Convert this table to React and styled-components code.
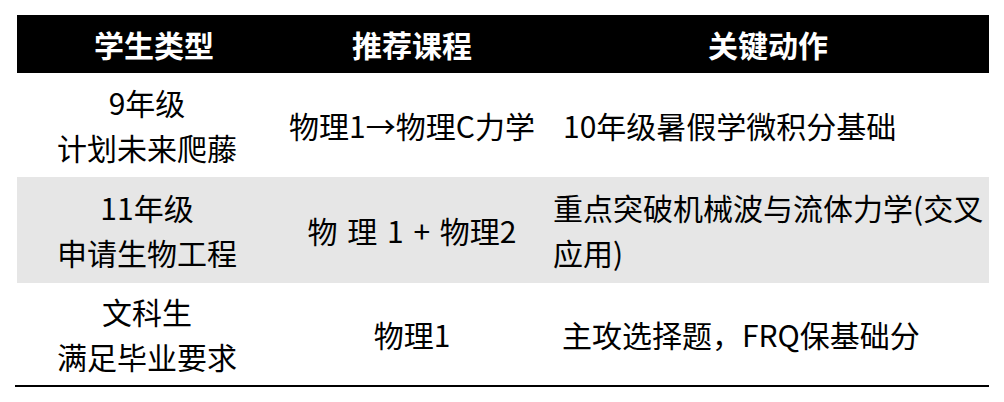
import React from "react";
import styled, { createGlobalStyle } from "styled-components";

const Global = createGlobalStyle`
  html, body { margin: 0; padding: 0; background: #fff; }
  body { font-family: "Noto Sans CJK SC", "Noto Sans", sans-serif; color: #000; }
`;

const Page = styled.div`
  padding: 15px 15px 0 15px;
  width: 974px;
`;

const Table = styled.div`
  display: flex;
  flex-direction: column;
  border-bottom: 2px solid #000;
`;

const Row = styled.div`
  display: grid;
  grid-template-columns: 260px 270px 1fr;
  height: ${(p) => p.$h}px;
  margin-left: 2px;
  background: ${(p) => (p.$head ? "#000" : p.$shade ? "#e6e6e6" : "#fff")};
  color: ${(p) => (p.$head ? "#fff" : "#000")};
`;

const Cell = styled.div`
  display: flex;
  flex-direction: column;
  justify-content: center;
  align-items: ${(p) => (p.$left ? "flex-start" : "center")};
  text-align: ${(p) => (p.$left ? "left" : "center")};
  padding-left: ${(p) => p.$pl || 0}px;
  padding-right: ${(p) => p.$pr || 0}px;
  font-size: 30px;
  line-height: 45px;
  font-weight: ${(p) => (p.$head ? 700 : 400)};
  word-spacing: ${(p) => p.$ws || 0}px;
  white-space: pre-wrap;
`;

const rows = [
  { h: 104, c1: ["9年级", "计划未来爬藤"], c2: "物理1→物理C力学", c3: "10年级暑假学微积分基础", pl: 16 },
  { h: 106, shade: true, c1: ["11年级", "申请生物工程"], c2: "物 理 1 + 物理2", ws: 3, c3: "重点突破机械波与流体力学(交叉应用)", pl: 6 },
  { h: 102, c1: ["文科生", "满足毕业要求"], c2: "物理1", c3: "主攻选择题，FRQ保基础分", pl: 15 },
];

export default function App() {
  return (
    <Page>
      <Global />
      <Table>
        <Row $head $h={58}>
          <Cell $head $pl={14}>学生类型</Cell>
          <Cell $head>推荐课程</Cell>
          <Cell $head>关键动作</Cell>
        </Row>
        {rows.map((r, i) => (
          <Row key={i} $h={r.h} $shade={r.shade}>
            <Cell>
              {r.c1.map((l) => (
                <span key={l}>{l}</span>
              ))}
            </Cell>
            <Cell $ws={r.ws}>{r.c2}</Cell>
            <Cell $left $pl={r.pl} $pr={4}>
              {r.c3}
            </Cell>
          </Row>
        ))}
      </Table>
    </Page>
  );
}
